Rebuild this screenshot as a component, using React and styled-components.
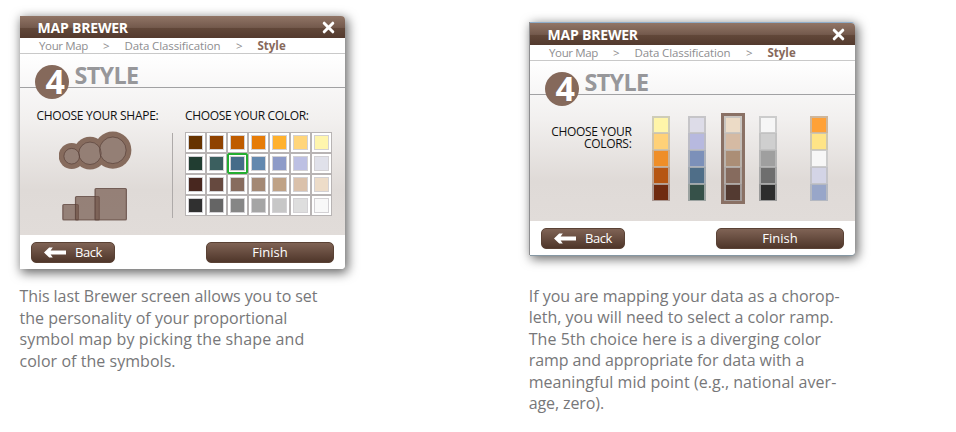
import React from 'react';
import styled, { createGlobalStyle } from 'styled-components';

const GlobalStyle = createGlobalStyle`
  * { box-sizing: border-box; }
  body {
    margin: 0;
    background: #fff;
    font-family: "Open Sans", "Noto Sans", sans-serif;
    overflow: hidden;
  }
`;

const Page = styled.main`
  width: 956px;
  height: 432px;
  display: flex;
  align-items: flex-start;
  gap: 185px;
  padding-left: 20px;
`;

const Example = styled.section`
  width: 325px;
  padding-top: ${p => p.$top}px;
`;

const Dialog = styled.article`
  display: flex;
  flex-direction: column;
  height: ${p => p.$height}px;
  background: #fff;
  border-radius: 0 4px 4px 0;
  box-shadow: 2px 3px 11px 1px rgba(0, 0, 0, 0.6);
  ${p => p.$framed && `
    border-top: 1px solid #8fadca;
    box-shadow: -1px 0 0 #8e8e90, 0 1px 0 #8597a3, 2px 3px 11px 1px rgba(0, 0, 0, 0.6);
  `}
`;

const TitleBar = styled.header`
  display: flex;
  align-items: center;
  justify-content: space-between;
  flex: none;
  height: 22px;
  padding: 0 10px 0 17.5px;
  border-radius: 0 4px 0 0;
  background: linear-gradient(#917566 0%, #745a4d 52%, #614739 56%, #533a2e 100%);
`;

const Title = styled.h1`
  margin: 0;
  padding-top: 1px;
  color: #fff;
  font-size: 14px;
  font-weight: 700;
  line-height: 22px;
  letter-spacing: -0.2px;
`;

const Crumbs = styled.nav`
  display: flex;
  flex: none;
  height: 16px;
  padding-left: 19px;
  border-bottom: 1px solid #c9c9c9;
  color: #8e8e90;
  font-size: 11.5px;
  line-height: 16px;
`;

const Crumb = styled.span`
  width: ${p => p.$width}px;
  white-space: nowrap;
  letter-spacing: ${p => p.$tracking || 0}px;
  ${p => p.$current && 'color: #87695b; font-weight: 700;'}
`;

const Body = styled.div`
  flex: 1;
  display: flex;
  flex-direction: column;
  background: linear-gradient(#fff 0%, #f8f7f7 18%, #f2f0ef 36%, #dfdad7 75%, #e1dcd9 100%);
`;

const StepHeader = styled.div`
  display: flex;
  align-items: flex-start;
  flex: none;
  height: 34px;
  padding-left: 14.5px;
  border-bottom: 1px solid #a1a1a3;
`;

const StepNumber = styled.div`
  flex: none;
  width: 34px;
  height: 34px;
  margin-top: 11.3px;
  padding-left: 11px;
  border-radius: 50%;
  background: #85695b;
  color: #fff;
  font-size: 34px;
  font-weight: 700;
  line-height: 33px;
`;

const StepTitle = styled.h2`
  margin: 0 0 0 6px;
  color: #97979a;
  font-size: 23.3px;
  font-weight: 700;
  line-height: 42px;
  letter-spacing: -0.6px;
`;

const Label = styled.div`
  color: #111;
  font-size: 12px;
  line-height: ${p => p.$leading || 16}px;
  letter-spacing: ${p => p.$tracking}px;
  white-space: nowrap;
`;

const SymbolOptions = styled.div`
  display: flex;
  padding: 20px 13px 0 16.5px;
`;

const ShapeColumn = styled.div`
  width: 135.5px;
`;

const ShapeDrawing = styled.svg`
  display: block;
  margin: ${p => p.$top}px 0 0 22.5px;
`;

const Rule = styled.div`
  width: 1px;
  height: 85px;
  margin: 25px 12px 0 0;
  background: #aeaaa9;
`;

const Palette = styled.div`
  display: grid;
  grid-template-columns: repeat(7, 21px);
  margin-top: 8px;
`;

const Well = styled.div`
  height: 21px;
  padding: 2px;
  border: 1px solid #b8b4b4;
  background: #fff;
  ${p => p.$selected && `
    outline: 2px solid #25ad31;
    outline-offset: -2.5px;
    border-radius: 2px;
    z-index: 1;
  `}
`;

const Swatch = styled.div`
  height: 15px;
  border: 1px solid #d3d1d4;
  background: ${p => p.$color};
`;

const RampOptions = styled.div`
  display: flex;
  align-items: flex-start;
  padding: 18px 0 0 20px;
`;

const RampLabel = styled.div`
  width: 81.5px;
  margin: 12.6px 20.5px 0 0;
  text-align: right;
`;

const Ramp = styled.div`
  width: ${p => (p.$selected ? 24 : 18)}px;
  padding: ${p => (p.$selected ? '3px' : '0')};
  margin: ${p => (p.$selected ? '0 15px 0 15px' : '3px 0 0')};
  margin-right: ${p => p.$gap}px;
  background: ${p => (p.$selected ? '#8a7165' : 'transparent')};
`;

const RampStep = styled.div`
  height: 17px;
  border: 1px solid rgba(190, 190, 190, 0.75);
  border-width: ${p => (p.$first ? '2px' : '1px')} 2px 1px;
  background: ${p => p.$color};
`;

const Footer = styled.footer`
  display: flex;
  justify-content: space-between;
  flex: none;
  height: 34px;
  padding: 7px 11px 0;
  background: #fff;
  border-radius: 0 0 4px 0;
`;

const Button = styled.button`
  display: flex;
  align-items: center;
  justify-content: center;
  gap: 9px;
  width: ${p => p.$width}px;
  height: 21px;
  padding: 0;
  border: 1px solid #5a4235;
  border-radius: 5px;
  background: linear-gradient(#7f6355, #4f362a);
  color: #fff;
  font: 13px/19px "Open Sans", "Noto Sans", sans-serif;
  letter-spacing: ${p => p.$tracking || 0}px;
`;

const Caption = styled.p`
  margin: ${p => p.$top}px 0 0 ${p => p.$left}px;
  color: #777779;
  font-size: 16px;
  line-height: 21.6px;
  white-space: nowrap;
`;

const CaptionLine = styled.span`
  display: block;
  letter-spacing: ${p => p.$tracking}px;
`;

const SHAPE_COLORS = [
  '#663300', '#8f4200', '#bf5c00', '#e67c08', '#ffb12e', '#ffd57b', '#fff5ad',
  '#213d31', '#3b5f5f', '#456c89', '#6388ae', '#8e9bc8', '#bdc0e3', '#e0e1ea',
  '#48271f', '#66493f', '#876c5e', '#a38874', '#bfa286', '#dac1ab', '#eddcc8',
  '#303030', '#656565', '#868686', '#a5a5a5', '#c7c7c7', '#dedede', '#f8f8f8',
];
const SELECTED_COLOR = 9;

const RAMPS = [
  { gap: 18, colors: ['#fff5a9', '#ffd178', '#ef8e28', '#b65613', '#702b10'] },
  { gap: 0, colors: ['#dddce8', '#b7b9df', '#7c90b9', '#4f6e88', '#365149'] },
  { gap: 14, selected: true, colors: ['#ecdbc6', '#d5baa3', '#ab8e76', '#866b5e', '#533a31'] },
  { gap: 33, colors: ['#f6f6f6', '#cfcfcf', '#9f9f9f', '#6e6e6e', '#2d2d2d'] },
  { gap: 0, colors: ['#ffa137', '#ffe486', '#f7f7f7', '#d3d4e6', '#98a6c9'] },
];

const SYMBOL_TEXT = [
  ['This last Brewer screen allows you to set', -0.07],
  ['the personality of your proportional', 0.02],
  ['symbol map by picking the shape and', 0.12],
  ['color of the symbols.', 0.04],
];

const RAMP_TEXT = [
  ['If you are mapping your data as a chorop-', -0.02],
  ['leth, you will need to select a color ramp.', 0.01],
  ['The 5th choice here is a diverging color', 0.06],
  ['ramp and appropriate for data with a', -0.06],
  ['meaningful mid point (e.g., national aver-', 0.04],
  ['age, zero).', -0.1],
];

function CloseIcon() {
  return (
    <svg width="13" height="13" viewBox="0 0 13 13">
      <path d="M2.2 2.2 10.8 10.8M10.8 2.2 2.2 10.8" stroke="#fff" strokeWidth="3" strokeLinecap="round" />
    </svg>
  );
}

function BackArrow() {
  return (
    <svg width="22" height="11" viewBox="0 0 22 11">
      <path d="M0 5.5 5.2.4H8.8L6.6 3.6H22V7.4H6.6L8.8 10.6H5.2Z" fill="#fff" />
    </svg>
  );
}

function CircleSymbols() {
  const circles = [[12.7, 26.2, 8.3, 13], [31, 23.3, 11.7, 16.3], [53.8, 20.3, 13.8, 18.6]];
  return (
    <ShapeDrawing $top={5.5} width="76" height="42" viewBox="0 0 76 42">
      {circles.map(([x, y, , halo]) => <circle key={x} cx={x} cy={y - 0.2} r={halo} fill="#866b5d" />)}
      {circles.map(([x, y, r]) => <circle key={x} cx={x} cy={y} r={r - 0.5} fill="#99867c" />)}
      {circles.map(([x, y, r]) => (
        <circle key={x} cx={x} cy={y} r={r - 0.5} fill="#725649" fillOpacity="0.12" stroke="#553c34" strokeOpacity="0.65" />
      ))}
    </ShapeDrawing>
  );
}

function SquareSymbols() {
  const squares = [[3.8, 20.5, 15.6], [16.5, 12.5, 23.8], [36, 4.5, 31.4]];
  return (
    <ShapeDrawing $top={12.5} width="76" height="38" viewBox="0 0 76 38">
      {squares.map(([x, y, size]) => (
        <rect key={x} x={x} y={y} width={size} height={36 - y} rx="1" fill="#725649" fillOpacity="0.68" stroke="#553c34" strokeOpacity="0.7" strokeWidth="1.2" />
      ))}
    </ShapeDrawing>
  );
}

function BrewerDialog({ height, framed, children }) {
  return (
    <Dialog $height={height} $framed={framed}>
      <TitleBar>
        <Title>MAP BREWER</Title>
        <CloseIcon />
      </TitleBar>
      <Crumbs>
        <Crumb $width={64} $tracking={-0.35}>Your Map</Crumb>
        <Crumb $width={21.5}>&gt;</Crumb>
        <Crumb $width={111.5} $tracking={-0.12}>Data Classification</Crumb>
        <Crumb $width={21.5}>&gt;</Crumb>
        <Crumb $width={40} $current>Style</Crumb>
      </Crumbs>
      <Body>
        <StepHeader>
          <StepNumber>4</StepNumber>
          <StepTitle>STYLE</StepTitle>
        </StepHeader>
        {children}
      </Body>
      <Footer>
        <Button $width={84} $tracking={-0.4}><BackArrow />Back</Button>
        <Button $width={128}>Finish</Button>
      </Footer>
    </Dialog>
  );
}

export default function App() {
  return (
    <Page>
      <GlobalStyle />
      <Example $top={16}>
        <BrewerDialog height={253}>
          <SymbolOptions>
            <ShapeColumn>
              <Label $tracking={-0.27}>CHOOSE YOUR SHAPE:</Label>
              <CircleSymbols />
              <SquareSymbols />
            </ShapeColumn>
            <Rule />
            <div>
              <Label $tracking={-0.35}>CHOOSE YOUR COLOR:</Label>
              <Palette>
                {SHAPE_COLORS.map((color, i) => (
                  <Well key={color} $selected={i === SELECTED_COLOR}><Swatch $color={color} /></Well>
                ))}
              </Palette>
            </div>
          </SymbolOptions>
        </BrewerDialog>
        <Caption $top={17} $left={-0.5}>
          {SYMBOL_TEXT.map(([text, tracking]) => <CaptionLine key={text} $tracking={tracking}>{text}</CaptionLine>)}
        </Caption>
      </Example>
      <Example $top={22}>
        <BrewerDialog height={233} framed>
          <RampOptions>
            <RampLabel>
              <Label $leading={12} $tracking={-0.3}>CHOOSE YOUR<br />COLORS:</Label>
            </RampLabel>
            {RAMPS.map(({ gap, selected, colors }) => (
              <Ramp key={colors[0]} $gap={gap} $selected={selected}>
                {colors.map((color, i) => <RampStep key={color} $color={color} $first={i === 0} />)}
              </Ramp>
            ))}
          </RampOptions>
        </BrewerDialog>
        <Caption $top={30.5} $left={-1.3}>
          {RAMP_TEXT.map(([text, tracking]) => <CaptionLine key={text} $tracking={tracking}>{text}</CaptionLine>)}
        </Caption>
      </Example>
    </Page>
  );
}
